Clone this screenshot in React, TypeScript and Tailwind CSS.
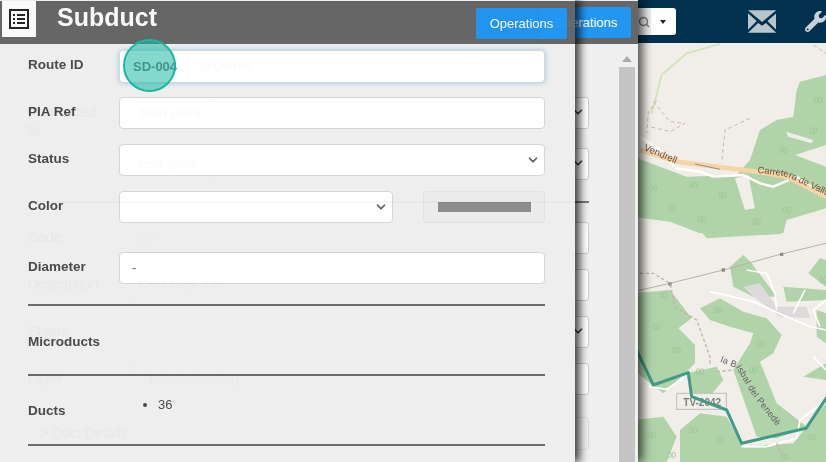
import { ChevronDown, Search } from 'lucide-react';
import { FaWrench } from 'react-icons/fa';

// the map behind the windows; coordinates were read off the 3x crops
function Trees({ points }: { points: number[][] }) {
    return (
        <g fill="none" stroke="#9dc596" strokeWidth="2.5">
            {points.map(([x, y]) => (
                <g key={`${x}-${y}`}>
                    <ellipse cx={x - 6} cy={y} rx="5" ry="9" />
                    <ellipse cx={x + 6} cy={y} rx="5" ry="9" />
                </g>
            ))}
        </g>
    );
}

function MapLayer() {
    return (
        <svg className="absolute left-0 top-0 blur-[0.6px]" width="826" height="462" viewBox="0 0 826 462">
            <rect width="826" height="462" fill="#f1eee9" />
            <g transform="translate(620,0) scale(0.3333)">
                <path fill="#b0d3a9" d="M540 245 L618 225 L618 625 L500 660 L490 700 L240 700 L150 665 L40 650 L40 470 L200 530 L350 525 L390 480 L420 390 L470 360 L520 350 L530 270 Z" />
                <path fill="#f1eee9" d="M345 535 L385 525 L405 625 L375 630 Z M498 395 L580 420 L575 430 L505 410 Z M525 465 L618 435 L618 500 Z" />
                <path fill="none" stroke="#cfe3b4" strokeWidth="5" d="M300 132 L200 160 L125 225 L95 340" />
                <path fill="none" stroke="#c9b9aa" strokeWidth="3" strokeDasharray="12 8" d="M110 300 L85 340 L80 400 M100 305 L150 365 L195 370 L150 395 L90 380 M390 355 L315 390 L305 490 M580 135 L618 160" />
                <path fill="none" stroke="#ffffff" strokeWidth="7" d="M60 410 L120 450 L170 505 L240 515 L280 530 L370 525 L420 550 L460 560 L530 530 L618 590" />
                <path fill="none" stroke="#f3d5a6" strokeWidth="14" d="M60 450 L170 485 L410 515 L500 530 L618 590" />
                <path fill="none" stroke="#a08d78" strokeWidth="3" d="M225 492 L300 508" />
                <path id="road-a" fill="none" d="M70 450 L170 492" />
                <path id="road-b" fill="none" d="M412 518 L500 530 L618 585" />
                <text fontSize="29" fill="#7b4a34" fontFamily="'Liberation Sans', sans-serif">
                    <textPath href="#road-a">Vendrell</textPath>
                </text>
                <text fontSize="28" fill="#7b4a34" fontFamily="'Liberation Sans', sans-serif">
                    <textPath href="#road-b">Carretera de Valls</textPath>
                </text>
                <Trees points={[[595, 300], [580, 392], [490, 450], [220, 555], [308, 585], [155, 625], [245, 658], [410, 665], [500, 630], [100, 565]]} />
            </g>
            <g transform="translate(620,230) scale(0.3333)">
                <path fill="#b0d3a9" d="M240 0 L490 0 L480 12 L260 25 Z" />
                <path fill="#b0d3a9" d="M40 190 L150 180 L215 265 L175 295 L225 345 L225 400 L200 425 L130 490 L40 420 Z" />
                <path fill="#b0d3a9" d="M240 235 L300 205 L370 245 L440 265 L485 315 L460 370 L420 395 L470 520 L560 590 L470 625 L410 620 L340 420 L390 340 L400 310 L330 290 L270 270 Z" />
                <path fill="#b0d3a9" d="M200 430 L290 410 L310 450 L260 510 L210 490 Z" />
                <path fill="#b0d3a9" d="M40 570 L130 560 L170 620 L140 696 L40 696 Z" />
                <path fill="#b0d3a9" d="M180 600 L240 550 L320 560 L370 650 L520 640 L618 520 L618 696 L180 696 Z" />
                <path fill="#b0d3a9" d="M330 110 L370 75 L395 100 L470 200 L400 200 L340 170 Z M565 130 L600 85 L618 90 L618 170 Z M550 440 L618 400 L618 450 Z M590 240 L618 250 L618 340 L590 320 Z M490 170 L618 180 L618 210 L500 215 Z" />
                <path fill="#dcdada" d="M370 170 L420 160 L470 230 L560 230 L570 265 L480 260 L400 200 Z" />
                <path fill="none" stroke="#ffffff" strokeWidth="5" d="M380 120 L440 130 L465 190 L470 240 M270 185 L400 215 L500 260 L570 290 L618 300 M555 180 L520 250 M618 210 L580 240 L600 290 M580 380 L618 420 M85 470 L140 478 L190 445 M365 650 L440 650 L530 625 L540 570 L618 510" />
                <path fill="none" stroke="#b6b0a9" strokeWidth="3" d="M40 185 L150 160 L310 120 L485 72 L618 40" />
                <path fill="#8e8d88" d="M145 157 h10 v10 h-10 Z M305 115 h10 v10 h-10 Z M480 68 h10 v10 h-10 Z" />
                <path fill="none" stroke="#c3b4a8" strokeWidth="4" strokeDasharray="10 7" d="M60 130 L100 130 L150 160 L165 230 L230 270 L270 380 L270 405 M290 425 L340 420 M470 640 L490 690" />
                <rect x="170" y="490" width="149" height="48" fill="#f1eee9" stroke="#bdbdbd" strokeWidth="3" />
                <text x="190" y="527" fontSize="30" fontWeight="700" fill="#7d7d7d" fontFamily="'Liberation Sans', sans-serif">TV-2042</text>
                <path id="town" fill="none" d="M300 395 L350 415 L400 500 L475 595" />
                <text fontSize="27" fill="#5f5a66" fontFamily="'Liberation Sans', sans-serif" letterSpacing="1">
                    <textPath href="#town">la Bisbal del Penedès</textPath>
                </text>
                <path fill="none" stroke="#3f9c87" strokeWidth="9" strokeLinejoin="round" d="M40 340 L100 465 L205 428 L215 500 L320 540 L365 640 L558 595 L625 495" />
                <Trees points={[[130, 195], [110, 290], [170, 360], [240, 425], [295, 240], [425, 342], [400, 420], [95, 615], [220, 600], [300, 630], [575, 622], [495, 680], [155, 675], [610, 150]]} />
            </g>
        </svg>
    );
}

function TopBar() {
    return (
        <div className="absolute left-0 top-0 flex h-[43px] w-[826px] items-center bg-[#02304f] pl-[638px]">
            <div className="flex h-[27px] w-[13px] items-center justify-center bg-[#eeeeee] text-[#777]">
                <Search className="shrink-0" size={12} strokeWidth={3} />
            </div>
            <div className="flex h-[27px] w-[26px] items-center justify-center rounded-r-[3px] bg-white">
                <div className="border-x-[3px] border-t-[4px] border-x-transparent border-t-[#222]" />
            </div>
            <svg className="ml-[72px]" width="29" height="23" viewBox="0 0 29 23">
                <path fill="#b9c5cc" d="M0 0 H29 L14.5 12 Z M0 3 L9 11 L0 20 Z M29 3 L20 11 L29 20 Z M0 23 L10.5 13 L14.5 16 L18.5 13 L29 23 Z" />
            </svg>
            <FaWrench className="ml-[29px] shrink-0 text-[#c9d2d8]" size={21} />
        </div>
    );
}

function BackRow({ label, children, className }: { label?: string; children?: React.ReactNode; className: string }) {
    return (
        <div className={`flex h-[32px] ${className}`}>
            <div className="w-[128px] shrink-0 pl-[28px] pt-[6px] pr-[28px] text-[14px] leading-[18px] text-[#555]">{label}</div>
            <div className="flex h-full w-[461px] items-center rounded-[3px] border border-[#ccc] bg-white text-[13.5px] text-[#888]">
                {children}
            </div>
        </div>
    );
}

function BackPanel() {
    return (
        <div className="absolute left-0 top-0 flex h-[462px] w-[638px] flex-col overflow-hidden bg-[#efefef] pt-px shadow-[5px_0_9px_rgba(0,0,0,0.65)]">
            <div className="flex h-[43px] shrink-0 items-center justify-end bg-[#666] pr-[7px]">
                <button className="h-[31px] w-[91px] rounded-[2px] bg-[#2196f3] text-[13px] text-white">Operations</button>
            </div>
            <div className="relative flex-1">
                <div className="mt-[6px] flex h-[32px] w-[570px] items-center rounded-[3px] bg-white text-[13.5px] text-[#888]">
                    <span className="ml-[187px] flex h-full items-center border-l border-[#bbb] pl-[11px]">@Owner</span>
                </div>
                <BackRow className="mt-[15px]" label="Connected to">
                    <span className="flex h-full w-[82px] items-center border-r border-[#ccc] pl-[10px]">Start point</span>
                </BackRow>
                <BackRow className="mt-[19px]">
                    <span className="flex h-full w-[82px] items-center border-r border-[#ccc] pl-[10px]">End point</span>
                </BackRow>
                <div className="mt-[21px] ml-[28px] h-[2px] w-[561px] bg-[#777]" />
                <BackRow className="mt-[19px]" label="Code">
                    <span className="pl-[10px]">36</span>
                </BackRow>
                <BackRow className="mt-[15px]" label="Description">
                    <span className="pl-[10px]">Duct rode 436</span>
                </BackRow>
                <BackRow className="mt-[15px]" label="Status" />
                <BackRow className="mt-[15px]" label="Layer">
                    <span className="pl-[21px]">batch-planning</span>
                </BackRow>
                <div className="mt-[22px] ml-[28px] flex h-[33px] w-[561px] items-center rounded-[3px] border border-[#ddd] pl-[11px] text-[14px] text-[#555]">
                    &gt; Duct Details
                </div>
                <ChevronDown className="absolute left-[571px] top-[61px] text-[#444]" size={14} strokeWidth={3} />
                <ChevronDown className="absolute left-[571px] top-[112px] text-[#444]" size={14} strokeWidth={3} />
                <ChevronDown className="absolute left-[571px] top-[280px] text-[#444]" size={14} strokeWidth={3} />
                <div className="absolute left-[619px] top-0 flex h-full w-[16px] flex-col items-center">
                    <div className="mt-[12px] mb-[5px] border-x-[5px] border-b-[6px] border-x-transparent border-b-[#aaa]" />
                    <div className="w-full flex-1 bg-[#c4c5c4]" />
                </div>
            </div>
        </div>
    );
}

function FormRow({ label, className, children }: { label: string; className: string; children: React.ReactNode }) {
    return (
        <div className={`flex items-center ${className}`}>
            <div className="w-[119px] shrink-0 pb-[2px] pl-[28px] text-[13.5px] font-bold text-[#444]">{label}</div>
            {children}
        </div>
    );
}

const fieldClass = 'flex items-center rounded-[4px] border border-[#d5d5d5] bg-white text-[13px] text-[#666]';

function FrontPanel() {
    return (
        <div className="absolute left-0 top-0 flex h-[462px] w-[575px] flex-col bg-[#eeeeee] pt-px opacity-[0.96] shadow-[5px_0_8px_rgba(0,0,0,0.75)]">
            <div className="flex h-[43px] shrink-0 items-start justify-between bg-[#666] pr-[8px]">
                <div className="flex items-start">
                    <div className="ml-[2px] flex h-[36px] w-[34px] items-center justify-center bg-white">
                        <svg width="20" height="20" viewBox="0 0 20 20">
                            <rect x="1" y="1" width="18" height="18" fill="none" stroke="#222" strokeWidth="2" />
                            <path stroke="#222" strokeWidth="2" d="M4 6 H6 M8 6 H16 M4 10 H6 M8 10 H16 M4 14 H6 M8 14 H16" />
                        </svg>
                    </div>
                    <h1 className="ml-[21px] text-[25px] leading-[32px] font-bold text-white">Subduct</h1>
                </div>
                <button className="mt-[7px] h-[31px] w-[91px] rounded-[2px] bg-[#2196f3] text-[13px] text-white">Operations</button>
            </div>
            <FormRow label="Route ID" className="mt-[6px]">
                <div className={`${fieldClass} h-[33px] w-[426px] border-[#8fb8d4] pl-[13px] font-semibold text-[#333] shadow-[0_0_5px_rgba(102,175,233,0.6)]`}>SD-004</div>
            </FormRow>
            <FormRow label="PIA Ref" className="mt-[14px]">
                <div className={`${fieldClass} h-[32px] w-[426px]`} />
            </FormRow>
            <FormRow label="Status" className="mt-[15px]">
                <div className={`${fieldClass} h-[32px] w-[426px] justify-end pr-[4px]`}>
                    <ChevronDown className="text-[#555]" size={14} strokeWidth={3} />
                </div>
            </FormRow>
            <FormRow label="Color" className="mt-[15px]">
                <div className={`${fieldClass} h-[32px] w-[274px] justify-end pr-[4px]`}>
                    <ChevronDown className="text-[#555]" size={14} strokeWidth={3} />
                </div>
                <div className="ml-[30px] flex h-[32px] w-[122px] items-center justify-center rounded-[4px] border border-[#e2e2e2] bg-[#ebebeb]">
                    <div className="h-[10px] w-[93px] bg-[#888]" />
                </div>
            </FormRow>
            <FormRow label="Diameter" className="mt-[29px]">
                <div className={`${fieldClass} h-[32px] w-[426px] pl-[12px]`}>-</div>
            </FormRow>
            <div className="mt-[20px] ml-[28px] h-[2px] w-[517px] bg-[#666]" />
            <FormRow label="Microducts" className="mt-[27px] h-[20px]">
                <div />
            </FormRow>
            <div className="mt-[21px] ml-[28px] h-[2px] w-[517px] bg-[#666]" />
            <div className="flex h-[68px] items-start">
                <div className="w-[119px] shrink-0 pl-[28px] pt-[25px] text-[13.5px] font-bold text-[#444]">Ducts</div>
                <ul className="list-disc pl-[39px] pt-[20px] text-[13px] leading-[18px] text-[#444]">
                    <li>36</li>
                </ul>
            </div>
            <div className="ml-[28px] h-[2px] w-[517px] bg-[#666]" />
        </div>
    );
}

export default function App() {
    return (
        <div className="relative h-[462px] w-[826px] overflow-hidden font-['Liberation_Sans',sans-serif]">
            <MapLayer />
            <TopBar />
            <BackPanel />
            <FrontPanel />
            {/* click highlight over the first field */}
            <div className="absolute left-[123px] top-[39px] h-[53px] w-[53px] rounded-full border-2 border-[#1ab8a3] bg-[#1db9a4]/55" />
        </div>
    );
}
